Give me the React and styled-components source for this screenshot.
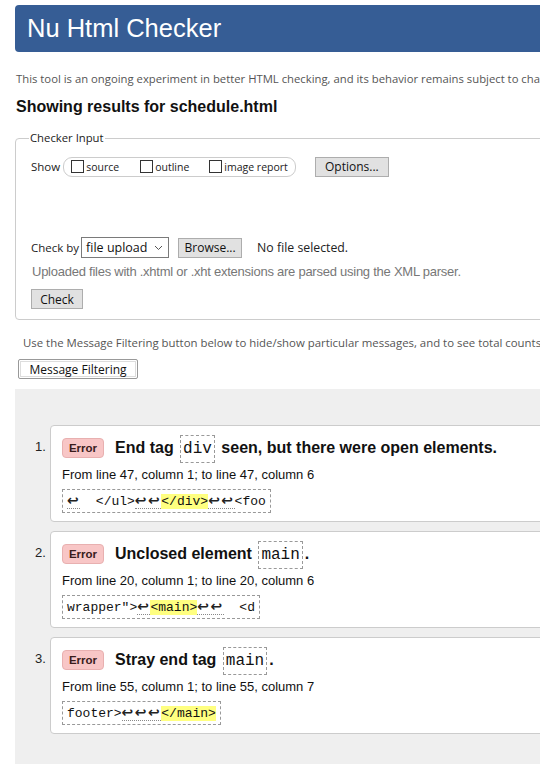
import React from "react";
import styled, { createGlobalStyle } from "styled-components";

const Global = createGlobalStyle`
  html, body { margin: 0; padding: 0; overflow: hidden; background: #fff; }
  body { font-family: "Liberation Sans", Arial, sans-serif; color: #111; }
`;

const Page = styled.div`
  width: 640px;
  padding: 5px 0 0 15px;
  box-sizing: border-box;
`;

const Header = styled.h1`
  margin: 0;
  height: 47px;
  background: #365d95;
  border-radius: 4px;
  color: #fff;
  font-family: "Liberation Sans", Arial, sans-serif;
  font-weight: normal;
  font-size: 25.5px;
  line-height: 47px;
  padding-left: 12px;
`;

const Intro = styled.p`
  margin: 20px 0 0 1px;
  font-family: "Open Sans", sans-serif;
  font-size: 11.3px;
  color: #555;
  white-space: nowrap;
  line-height: 14px;
`;

const Heading = styled.h2`
  margin: 12px 0 0 1px;
  font-size: 16px;
  font-weight: bold;
  line-height: 18px;
  color: #111;
`;

const Fieldset = styled.fieldset`
  margin: 15px 0 0 0;
  border: 1px solid #ccc;
  border-radius: 4px;
  padding: 0 15px 10px 15px;
  min-width: 0;
`;

const Legend = styled.legend`
  font-family: "Open Sans", sans-serif;
  font-size: 11.3px;
  line-height: 14px;
  color: #222;
  padding: 0 1px;
  margin-left: -2px;
`;

const Row = styled.div`
  display: flex;
  align-items: center;
  height: ${(p) => p.$h || 21}px;
  margin-top: ${(p) => p.$mt || 0}px;
  font-family: "Open Sans", sans-serif;
  font-size: 11.5px;
  color: #222;
`;

const Pill = styled.span`
  display: inline-flex;
  align-items: center;
  height: 18px;
  border: 1px solid #ccc;
  border-radius: 9px;
  padding: 0 7px 0 7px;
  margin-left: 3px;
`;

const Check = styled.label`
  display: inline-flex;
  align-items: center;
  margin-right: ${(p) => p.$mr || 0}px;
  font-size: 10.5px;
  color: #222;
`;

const Box = styled.span`
  width: 11px;
  height: 11px;
  border: 1px solid #333;
  background: #fff;
  margin-right: 2px;
  display: inline-block;
`;

const Button = styled.span`
  display: inline-flex;
  align-items: center;
  justify-content: center;
  box-sizing: border-box;
  height: 20px;
  width: ${(p) => p.$w}px;
  margin-left: ${(p) => p.$ml || 0}px;
  background: #e1e1e1;
  border: 1px solid #adadad;
  font-family: "Open Sans", sans-serif;
  font-size: 12px;
  color: #111;
`;

const Select = styled.span`
  display: inline-flex;
  align-items: center;
  justify-content: space-between;
  box-sizing: border-box;
  width: 88px;
  height: 21px;
  margin-left: 2px;
  border: 1px solid #7a7a7a;
  padding: 0 5px 0 4px;
  font-family: "Open Sans", sans-serif;
  font-size: 12.5px;
  color: #111;
`;

const Plain = styled.span`
  margin-left: ${(p) => p.$ml || 0}px;
  font-family: "Open Sans", sans-serif;
  font-size: 12.3px;
`;

const Note = styled.p`
  margin: 7px 0 0 1px;
  font-family: "Liberation Sans", Arial, sans-serif;
  font-size: 13px;
  color: #777;
  letter-spacing: -0.25px;
  line-height: 14px;
  white-space: nowrap;
`;

const Hint = styled.p`
  margin: 15px 0 0 8px;
  font-family: "Open Sans", sans-serif;
  font-size: 11.4px;
  color: #555;
  white-space: nowrap;
  line-height: 16px;
`;

const FilterButton = styled.div`
  margin: 8px 0 0 3px;
  width: 120px;
  height: 20px;
  box-sizing: border-box;
  border: 1px solid #999;
  box-shadow: inset 0 0 0 1px #fff, inset 0 0 0 2px #ddd;
  border-radius: 2px;
  background: #fff;
  font-family: "Open Sans", sans-serif;
  font-size: 12px;
  display: flex;
  align-items: center;
  justify-content: center;
  color: #111;
`;

const Results = styled.div`
  margin-top: 10px;
  background: #efefef;
  height: 400px;
  padding: 36px 0 0 35px;
  box-sizing: border-box;
`;

const List = styled.ol`
  margin: 0;
  padding: 0;
  list-style: none;
  display: flex;
  flex-direction: column;
  gap: 9px;
`;

const Item = styled.li`
  display: flex;
  align-items: flex-start;
`;

const Num = styled.span`
  width: 15px;
  margin-left: -15px;
  padding-top: 14px;
  font-size: 13px;
  color: #222;
`;

const Card = styled.div`
  flex: 1;
  background: #fff;
  border: 1px solid #ccc;
  border-radius: 4px;
  height: 97px;
  box-sizing: border-box;
  padding: 8px 0 0 11px;
`;

const TitleRow = styled.div`
  display: flex;
  align-items: center;
  height: 28px;
  font-size: 16px;
  font-weight: bold;
  color: #111;
`;

const Badge = styled.span`
  display: inline-flex;
  align-items: center;
  justify-content: center;
  width: 42px;
  height: 20px;
  box-sizing: border-box;
  background: #f8c6c6;
  border: 1px solid #e8b0b0;
  border-radius: 4px;
  font-size: 11.5px;
  font-weight: bold;
  color: #3a1c1c;
  margin-right: 11px;
`;

const Code = styled.code`
  font-family: "Liberation Mono", "Courier New", monospace;
  font-weight: normal;
  font-size: 16px;
  border: 1px dashed #999;
  padding: 4px 2px;
  margin: 0 2px;
  line-height: 18px;
`;

const Location = styled.p`
  margin: 5px 0 0 0;
  font-size: 13px;
  line-height: 16px;
  color: #111;
`;

const Extract = styled.code`
  display: inline-block;
  margin-top: 6px;
  border: 1px dashed #999;
  padding: 2px 4px;
  font-family: "Liberation Mono", "Courier New", monospace;
  font-size: 13px;
  line-height: 16px;
  white-space: pre;
  color: #111;
`;

const Ret = styled.span`
  font-family: "DejaVu Sans", sans-serif;
  font-size: 14px;
  font-weight: bold;
  letter-spacing: 1.5px;
  color: #222;
  border-bottom: ${(p) => (p.$u ? "1px dotted #888" : "none")};
`;

const Hl = styled.span`
  background: #ffff80;
`;

function Errors() {
  const items = [
    {
      n: "1.",
      title: (
        <>
          End tag <Code>div</Code> seen, but there were open elements.
        </>
      ),
      loc: "From line 47, column 1; to line 47, column 6",
      extract: (
        <>
          <Ret $u>↩</Ret>{"  </ul>"}
          <Ret $u>↩↩</Ret>
          <Hl>{"</div>"}</Hl>
          <Ret $u>↩↩</Ret>
          {"<foo"}
        </>
      ),
    },
    {
      n: "2.",
      title: (
        <>
          Unclosed element <Code>main</Code>.
        </>
      ),
      loc: "From line 20, column 1; to line 20, column 6",
      extract: (
        <>
          {'wrapper">'}
          <Ret $u>↩</Ret>
          <Hl>{"<main>"}</Hl>
          <Ret $u>↩↩</Ret>
          {"  <d"}
        </>
      ),
    },
    {
      n: "3.",
      title: (
        <>
          Stray end tag <Code>main</Code>.
        </>
      ),
      loc: "From line 55, column 1; to line 55, column 7",
      extract: (
        <>
          {"footer>"}
          <Ret $u>↩↩↩</Ret>
          <Hl>{"</main>"}</Hl>
        </>
      ),
    },
  ];
  return (
    <List>
      {items.map((it) => (
        <Item key={it.n}>
          <Num>{it.n}</Num>
          <Card>
            <TitleRow>
              <Badge>Error</Badge>
              <span>{it.title}</span>
            </TitleRow>
            <Location>{it.loc}</Location>
            <Extract>{it.extract}</Extract>
          </Card>
        </Item>
      ))}
    </List>
  );
}

export default function App() {
  return (
    <>
      <Global />
      <Page>
        <Header>Nu Html Checker</Header>
        <Intro>
          This tool is an ongoing experiment in better HTML checking, and its behavior remains subject to change.
        </Intro>
        <Heading>Showing results for schedule.html</Heading>
        <Fieldset>
          <Legend>Checker Input</Legend>
          <Row $mt={11}>
            Show
            <Pill>
              <Check $mr={21}>
                <Box />
                source
              </Check>
              <Check $mr={20}>
                <Box />
                outline
              </Check>
              <Check>
                <Box />
                image report
              </Check>
            </Pill>
            <Button $w={74} $ml={19}>Options...</Button>
          </Row>
          <Row $mt={60}>
            Check by
            <Select>
              file upload
              <svg width="9" height="6" viewBox="0 0 9 6">
                <path d="M1 1 L4.5 4.5 L8 1" fill="none" stroke="#555" strokeWidth="1" />
              </svg>
            </Select>
            <Button $w={64} $ml={9}>Browse...</Button>
            <Plain $ml={15}>No file selected.</Plain>
          </Row>
          <Note>Uploaded files with .xhtml or .xht extensions are parsed using the XML parser.</Note>
          <Row $mt={10} $h={20}>
            <Button $w={52}>Check</Button>
          </Row>
        </Fieldset>
        <Hint>
          Use the Message Filtering button below to hide/show particular messages, and to see total counts of errors and warnings.
        </Hint>
        <FilterButton>Message Filtering</FilterButton>
        <Results>
          <Errors />
        </Results>
      </Page>
    </>
  );
}
